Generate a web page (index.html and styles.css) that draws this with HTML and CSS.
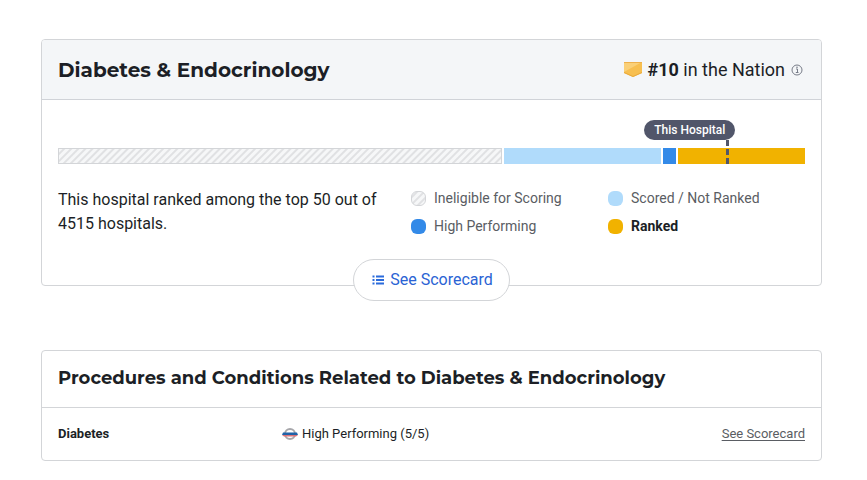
FILE: index.html
```html
<!DOCTYPE html>
<html lang="en">
<head>
<meta charset="utf-8">
<meta name="viewport" content="width=device-width, initial-scale=1">
<title>Diabetes &amp; Endocrinology</title>
<link rel="stylesheet" href="styles.css">
</head>
<body>
<main class="page">
  <section class="card">
    <header class="card-head">
      <h2 class="title">Diabetes &amp; Endocrinology</h2>
      <p class="rank">
        <svg class="badge" viewBox="0 0 18 15" aria-hidden="true">
          <path d="M0 0H18V11L9 15L0 11Z" fill="#f7bf50"/>
          <path d="M0 0H18L0 10Z" fill="#fad078"/>
          <path d="M0 0H18V1H0Z" fill="#eeb04b"/>
          <path d="M0 10L9 14L18 10V11L9 15L0 11Z" fill="#e9a93a"/>
        </svg>
        <span><strong>#10</strong> in the Nation</span>
        <button class="info" type="button" aria-label="About this ranking">
          <svg viewBox="0 0 12 12" aria-hidden="true">
            <circle cx="6" cy="6" r="5" fill="none" stroke="#777c88"/>
            <path d="M5 5H6.500V8.500M4.800 8.500H7.500" fill="none" stroke="#777c88"/>
            <circle cx="6" cy="3.300" r=".8" fill="#777c88"/>
          </svg>
        </button>
      </p>
    </header>
    <div class="card-body">
      <div class="chart">
        <div class="bar">
          <span class="seg hatch" style="flex-grow:442"></span>
          <span class="seg light" style="flex-grow:157"></span>
          <span class="seg blue" style="flex-grow:13"></span>
          <span class="seg gold" style="flex-grow:127"></span>
        </div>
        <div class="marker" style="left:89.600%">
          <span class="pill">This Hospital</span>
          <span class="dash"></span>
        </div>
      </div>
      <div class="details">
        <p class="summary">This hospital ranked among the top 50 out of 4515 hospitals.</p>
        <ul class="legend">
          <li><span class="dot hatch"></span>Ineligible for Scoring</li>
          <li><span class="dot light"></span>Scored / Not Ranked</li>
          <li><span class="dot blue"></span>High Performing</li>
          <li class="current"><span class="dot gold"></span>Ranked</li>
        </ul>
      </div>
    </div>
    <a class="scorecard" href="#scorecard">
      <svg viewBox="0 0 12 10" aria-hidden="true">
        <path d="M0.500 1.500H2.500M0.500 5H2.500M0.500 8.500H2.500M4 1.500H12M4 5H12M4 8.500H12" stroke="#2a6bdc" stroke-width="2"/>
      </svg>
      See Scorecard
    </a>
  </section>

  <section class="card">
    <h3 class="title related-title">Procedures and Conditions Related to Diabetes &amp; Endocrinology</h3>
    <table class="related">
      <tbody>
        <tr>
          <th scope="row">Diabetes</th>
          <td>
            <span class="rating">
              <svg viewBox="0 0 16 12" aria-hidden="true">
                <circle cx="8" cy="6" r="5" fill="#fff" stroke="#a7a7ab" stroke-width="2"/>
                <path d="M0 7H16L14 8.500H2Z" fill="#dc7376"/>
                <path d="M1 4.500H15L16 7H0Z" fill="#1f62a8"/>
              </svg>
              High Performing (5/5)
            </span>
          </td>
          <td class="action"><a href="#diabetes">See Scorecard</a></td>
        </tr>
      </tbody>
    </table>
  </section>
</main>
</body>
</html>
```
FILE: styles.css
```css
* {
  box-sizing: border-box;
}

body {
  margin: 0;
  background: #fff;
  color: #1c1f26;
  font-family: Roboto, "Liberation Sans", sans-serif;
  font-size: 16px;
  line-height: 24px;
}

h2, h3, p, ul {
  margin: 0;
}

.page {
  display: flex;
  flex-direction: column;
  gap: 64px;
  padding: 39px 45px 16px 41px;
}

.card {
  border: 1px solid #d3d5d8;
  border-radius: 4px;
}

.title {
  font-family: Montserrat, Inter, sans-serif;
  font-size: 20px;
  font-weight: 700;
}

.card-head {
  display: flex;
  align-items: center;
  justify-content: space-between;
  height: 60px;
  padding: 0 16px;
  border-bottom: 1px solid #d0d3d8;
  border-radius: 3px 3px 0 0;
  background: #f4f6f8;
}

.rank {
  display: flex;
  align-items: center;
  gap: 6px;
  font-size: 18px;
}

.badge {
  width: 18px;
  height: 15px;
}

.rank strong {
  font-weight: 700;
}

.info {
  display: flex;
  padding: 2px 2px 2px 0;
  border: 0;
  background: none;
}

.info svg {
  width: 12px;
  height: 12px;
}

.card-body {
  padding: 48px 16px 19px;
}

.chart {
  position: relative;
}

.bar {
  display: flex;
  gap: 2px;
  height: 16px;
}

.seg {
  flex: 0 0 0;
}

.hatch {
  border: 1px solid #d3d5d8;
  background: repeating-linear-gradient(135deg, #f6f7f8 0 2px, #e0e1e3 3px 4px, #f6f7f8 5px);
}

.light {
  background: #b0dbfb;
}

.blue {
  background: #338ae8;
}

.gold {
  background: #f1b200;
}

.marker {
  position: absolute;
  bottom: 0;
  height: 44px;
}

.pill {
  position: absolute;
  top: 0;
  right: -8px;
  padding: 0 10px;
  border-radius: 10px;
  background: #51566a;
  color: #fff;
  font-size: 12px;
  font-weight: 500;
  line-height: 20px;
  white-space: nowrap;
}

.dash {
  position: absolute;
  top: 20px;
  right: -2px;
  bottom: 0;
  width: 3px;
  background: repeating-linear-gradient(#51566a 0 6px, transparent 6px 9px);
}

.details {
  display: flex;
  justify-content: space-between;
  padding-top: 24px;
}

.summary {
  width: 330px;
}

.legend {
  display: grid;
  grid-template-columns: 1fr 1fr;
  width: 394px;
  padding: 0;
  color: #5a5d63;
  font-size: 14px;
  line-height: 28px;
  list-style: none;
  margin-top: -4px;
}

.legend li {
  display: flex;
  align-items: center;
  gap: 8px;
}

.legend .current {
  color: #1c1f26;
  font-weight: 700;
}

.dot {
  width: 15px;
  height: 15px;
  border-radius: 6px;
}

.scorecard {
  display: flex;
  align-items: center;
  gap: 6px;
  width: max-content;
  height: 42px;
  margin: 0 auto -16px;
  padding: 0 16px 0 18px;
  border: 1px solid #d3d5d8;
  border-radius: 21px;
  background: #fff;
  color: #2a63d4;
  text-decoration: none;
}

.scorecard svg {
  width: 12px;
  height: 10px;
}

.related-title {
  padding: 15px 16px 17px;
  border-bottom: 1px solid #d3d5d8;
  font-size: 18px;
}

.related {
  width: 100%;
  border-collapse: collapse;
  table-layout: fixed;
  font-size: 13px;
  line-height: 20px;
}

.related th,
.related td {
  padding: 16px 0;
}

.related th {
  width: 240px;
  padding-left: 16px;
  font-weight: 700;
  text-align: left;
}

.related .action {
  padding-right: 16px;
  text-align: right;
}

.related a {
  color: #5a5d63;
  text-underline-offset: 2px;
}

.rating {
  display: flex;
  align-items: center;
  gap: 4px;
}

.rating svg {
  width: 16px;
  height: 12px;
}
```
